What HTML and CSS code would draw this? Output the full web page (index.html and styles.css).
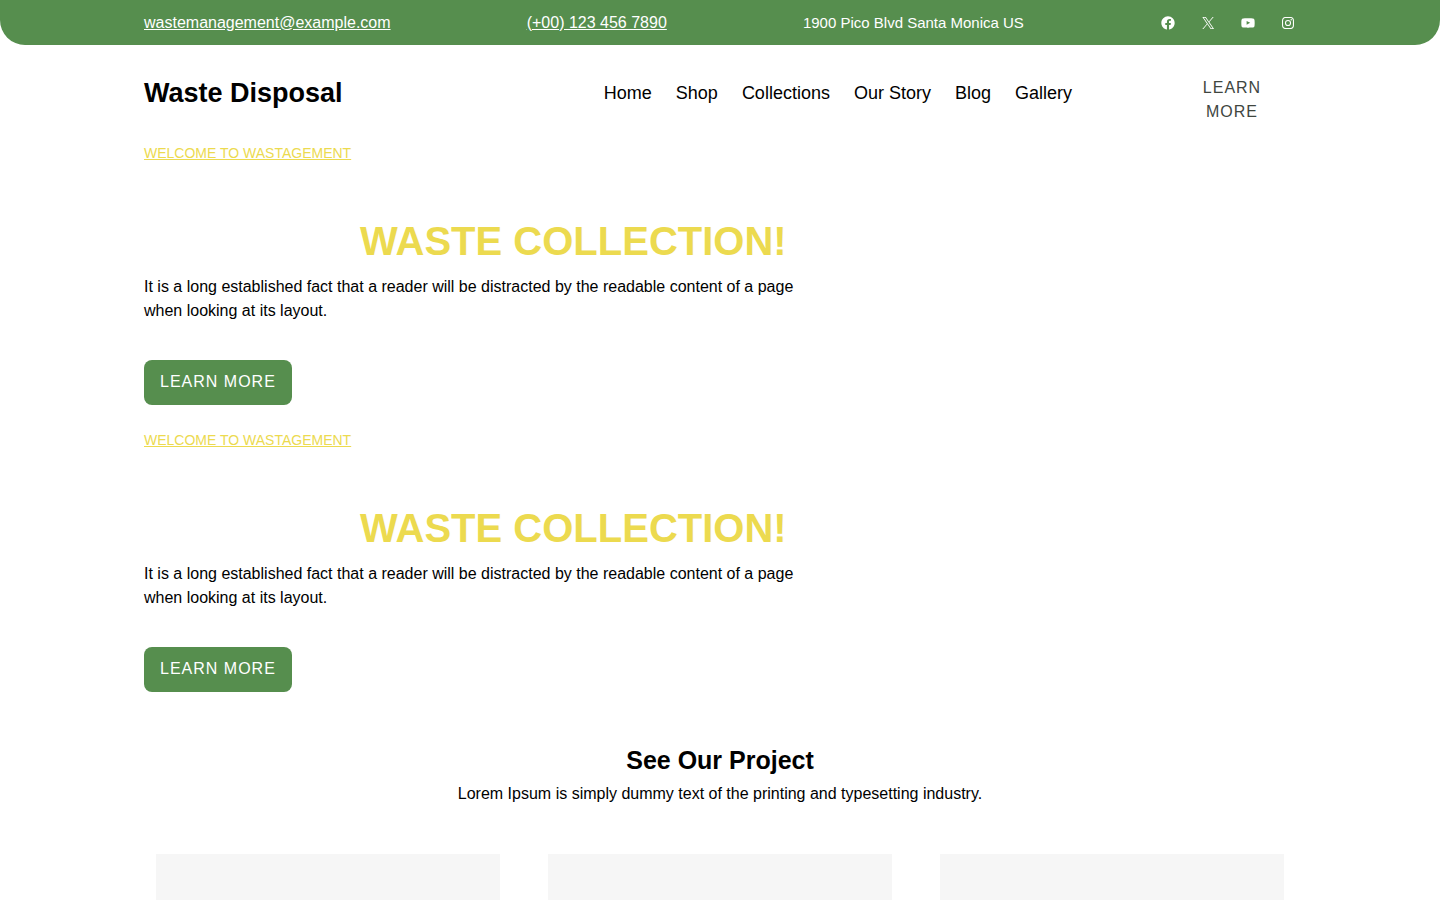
FILE: index.html
```html
<!DOCTYPE html>
<html lang="en">
<head>
    <meta charset="UTF-8">
    <meta name="viewport" content="width=device-width, initial-scale=1.0">
    <title>Waste Disposal</title>
    <link rel="stylesheet" href="styles.css">
</head>
<body>
    <header>
        <div class="top-bar">
            <div class="container top-bar-inner">
                <a href="mailto:wastemanagement@example.com">wastemanagement@example.com</a>
                <a href="tel:+001234567890">(+00) 123 456 7890</a>
                <p class="address">1900 Pico Blvd Santa Monica US</p>
                <ul class="social">
                    <li><a href="#" aria-label="Facebook"><svg viewBox="0 0 24 24"><path d="M12 2C6.5 2 2 6.5 2 12c0 5 3.7 9.1 8.4 9.9v-7H7.9V12h2.5V9.8c0-2.5 1.5-3.9 3.8-3.9 1.1 0 2.2.2 2.2.2v2.5h-1.3c-1.2 0-1.6.8-1.6 1.6V12h2.8l-.4 2.9h-2.3v7C18.3 21.1 22 17 22 12c0-5.5-4.5-10-10-10z"/></svg></a></li>
                    <li><a href="#" aria-label="X"><svg viewBox="0 0 24 24"><path d="M13.982 10.622 20.54 3h-1.554l-5.693 6.618L8.745 3H3.5l6.876 10.007L3.5 21h1.554l6.012-6.989L15.868 21h5.245l-7.131-10.378Zm-2.128 2.474-.697-.997-5.543-7.93H8l4.474 6.4.697.996 5.815 8.318h-2.387l-4.745-6.787Z"/></svg></a></li>
                    <li><a href="#" aria-label="YouTube"><svg viewBox="0 0 24 24"><path d="M21.8 8s-.195-1.377-.795-1.984c-.76-.797-1.613-.8-2.004-.847-2.798-.203-6.996-.203-6.996-.203h-.01s-4.197 0-6.996.202c-.39.046-1.242.05-2.003.846C2.395 6.623 2.2 8 2.2 8S2 9.62 2 11.24v1.517c0 1.618.2 3.237.2 3.237s.195 1.378.795 1.985c.76.797 1.76.77 2.205.855 1.6.153 6.8.2 6.8.2s4.203-.005 7-.208c.392-.047 1.244-.05 2.005-.847.6-.607.795-1.985.795-1.985s.2-1.618.2-3.237v-1.517C22 9.62 21.8 8 21.8 8zM9.935 14.595l-.002-5.62 5.404 2.82-5.402 2.8z"/></svg></a></li>
                    <li><a href="#" aria-label="Instagram"><svg viewBox="0 0 24 24"><path d="M12 4.622c2.403 0 2.688.009 3.637.052.877.04 1.354.187 1.671.31.42.163.72.358 1.035.673s.51.615.673 1.035c.123.317.27.794.31 1.671.043.949.052 1.234.052 3.637s-.009 2.688-.052 3.637c-.04.877-.187 1.354-.31 1.671-.163.42-.358.72-.673 1.035s-.615.51-1.035.673c-.317.123-.794.27-1.671.31-.949.043-1.233.052-3.637.052s-2.688-.009-3.637-.052c-.877-.04-1.354-.187-1.671-.31a2.8 2.8 0 0 1-1.035-.673 2.8 2.8 0 0 1-.673-1.035c-.123-.317-.27-.794-.31-1.671-.043-.949-.052-1.234-.052-3.637s.009-2.688.052-3.637c.04-.877.187-1.354.31-1.671.163-.42.358-.72.673-1.035s.615-.51 1.035-.673c.317-.123.794-.27 1.671-.31.949-.043 1.234-.052 3.637-.052M12 3c-2.444 0-2.751.01-3.711.054-.958.044-1.612.196-2.184.418a4.400 4.400 0 0 0-1.594 1.039 4.400 4.400 0 0 0-1.039 1.594c-.222.572-.374 1.226-.418 2.184C3.010 9.249 3 9.556 3 12s.010 2.751.054 3.711c.044.958.196 1.612.418 2.185.230.591.538 1.092 1.038 1.592s1.002.808 1.594 1.038c.572.222 1.227.375 2.185.418.960.044 1.267.054 3.711.054s2.751-.010 3.711-.054c.958-.044 1.612-.196 2.185-.418a4.400 4.400 0 0 0 1.592-1.038c.5-.5.808-1.002 1.038-1.594.222-.572.375-1.227.418-2.185.044-.960.054-1.267.054-3.711s-.010-2.751-.054-3.711c-.044-.958-.196-1.612-.418-2.185a4.400 4.400 0 0 0-1.038-1.592 4.400 4.400 0 0 0-1.594-1.038c-.572-.222-1.227-.375-2.185-.418C14.751 3.010 14.444 3 12 3m0 4.378a4.622 4.622 0 1 0 0 9.244 4.622 4.622 0 0 0 0-9.244M12 15a3 3 0 1 1 0-6 3 3 0 0 1 0 6m4.804-8.884a1.080 1.080 0 1 0 0 2.160 1.080 1.080 0 0 0 0-2.160"/></svg></a></li>
                </ul>
            </div>
        </div>

        <div class="container main-header">
            <h1 class="site-title"><a href="#">Waste Disposal</a></h1>
            <nav class="main-nav">
                <a href="#">Home</a>
                <a href="#">Shop</a>
                <a href="#">Collections</a>
                <a href="#">Our Story</a>
                <a href="#">Blog</a>
                <a href="#">Gallery</a>
            </nav>
            <a class="header-link" href="#">LEARN MORE</a>
        </div>
    </header>

    <main class="container">
        <section class="slide">
            <a class="slide-tag" href="#">WELCOME TO WASTAGEMENT</a>
            <h2>WASTE COLLECTION!</h2>
            <p>It is a long established fact that a reader will be distracted by the readable content of a page when looking at its layout.</p>
            <a class="btn" href="#">LEARN MORE</a>
        </section>

        <section class="slide">
            <a class="slide-tag" href="#">WELCOME TO WASTAGEMENT</a>
            <h2>WASTE COLLECTION!</h2>
            <p>It is a long established fact that a reader will be distracted by the readable content of a page when looking at its layout.</p>
            <a class="btn" href="#">LEARN MORE</a>
        </section>

        <section class="projects">
            <h2>See Our Project</h2>
            <p>Lorem Ipsum is simply dummy text of the printing and typesetting industry.</p>
            <div class="project-grid">
                <div class="project-card"></div>
                <div class="project-card"></div>
                <div class="project-card"></div>
            </div>
        </section>
    </main>
</body>
</html>
```

FILE: styles.css
```css
* {
    box-sizing: border-box;
}

body {
    margin: 0;
    font-family: "Liberation Sans", Arial, sans-serif;
    font-size: 16px;
    line-height: 24px;
    color: #000;
    background-color: #fff;
}

h1, h2, p, ul {
    margin: 0;
    padding: 0;
}

.container {
    width: 80%;
    margin: 0 auto;
}

/* top bar */
.top-bar {
    background-color: #568e4e;
    color: #fff;
    border-radius: 0 0 25px 25px;
}

.top-bar-inner {
    display: flex;
    justify-content: space-between;
    align-items: center;
    min-height: 45px;
}

.top-bar a {
    color: #fff;
}

.address {
    font-size: 15px;
}

.social {
    display: flex;
    gap: 24px;
    list-style: none;
}

.social a,
.social svg {
    display: block;
    width: 16px;
    height: 16px;
}

.social svg {
    fill: #fff;
}

/* header */
.main-header {
    display: flex;
    align-items: flex-start;
    padding: 31px 0 17px;
    line-height: 34px;
}

.site-title {
    font-size: 27px;
}

.site-title a,
.main-nav a {
    color: #000;
    text-decoration: none;
}

.main-nav {
    display: flex;
    gap: 24px;
    margin-left: auto;
    margin-right: 96px;
    font-size: 18px;
}

.header-link {
    width: 128px;
    padding: 0 16px;
    color: #40463f;
    letter-spacing: 1px;
    line-height: 24px;
    text-align: center;
    text-decoration: none;
}

/* slides */
.slide {
    max-width: 660px;
    margin-bottom: 23px;
}

.slide-tag {
    display: block;
    color: #ecda4f;
    font-size: 14px;
}

.slide h2 {
    margin-top: 52px;
    padding-left: 216px;
    color: #ecda4f;
    font-size: 40px;
    line-height: 48px;
}

.slide p {
    margin: 10px 0 37px;
}

.btn {
    display: block;
    width: fit-content;
    padding: 10px 16px 11px;
    border-radius: 8px;
    background-color: #568e4e;
    color: #fff;
    letter-spacing: 1px;
    text-decoration: none;
}

/* projects */
.projects {
    margin-top: 52px;
    text-align: center;
}

.projects h2 {
    margin-bottom: 6px;
    font-size: 25px;
    line-height: 32px;
}

.project-grid {
    display: grid;
    grid-template-columns: repeat(3, 1fr);
    gap: 48px;
    padding: 48px 12px;
}

.project-card {
    min-height: 300px;
    background-color: #f6f6f6;
}
```
